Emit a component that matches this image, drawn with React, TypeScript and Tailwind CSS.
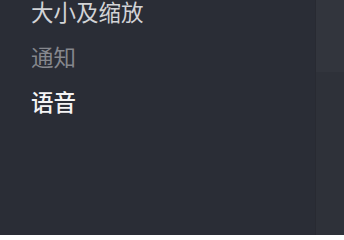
export default function App() {
  return (
    <div className="flex h-[235px] w-[344px] overflow-hidden bg-[#2a2d36]" style={{ fontFamily: '"Noto Sans CJK SC", "Noto Sans", sans-serif' }}>
      <div className="flex w-[315px] flex-col pl-[31px] -mt-[11px]">
        <div className="h-[45px] flex items-center text-[22.5px] text-[#d2d3d6]">大小及缩放</div>
        <div className="h-[45px] flex items-center text-[22.5px] text-[#85878d]">通知</div>
        <div className="h-[45px] flex items-center text-[22.5px] font-medium text-[#f4f4f5]">语音</div>
      </div>
      <div className="flex flex-1 flex-col border-l border-[#282a32]">
        <div className="h-[72px] bg-[#32353d]" />
        <div className="flex-1 bg-[#2e3139]" />
      </div>
    </div>
  );
}
